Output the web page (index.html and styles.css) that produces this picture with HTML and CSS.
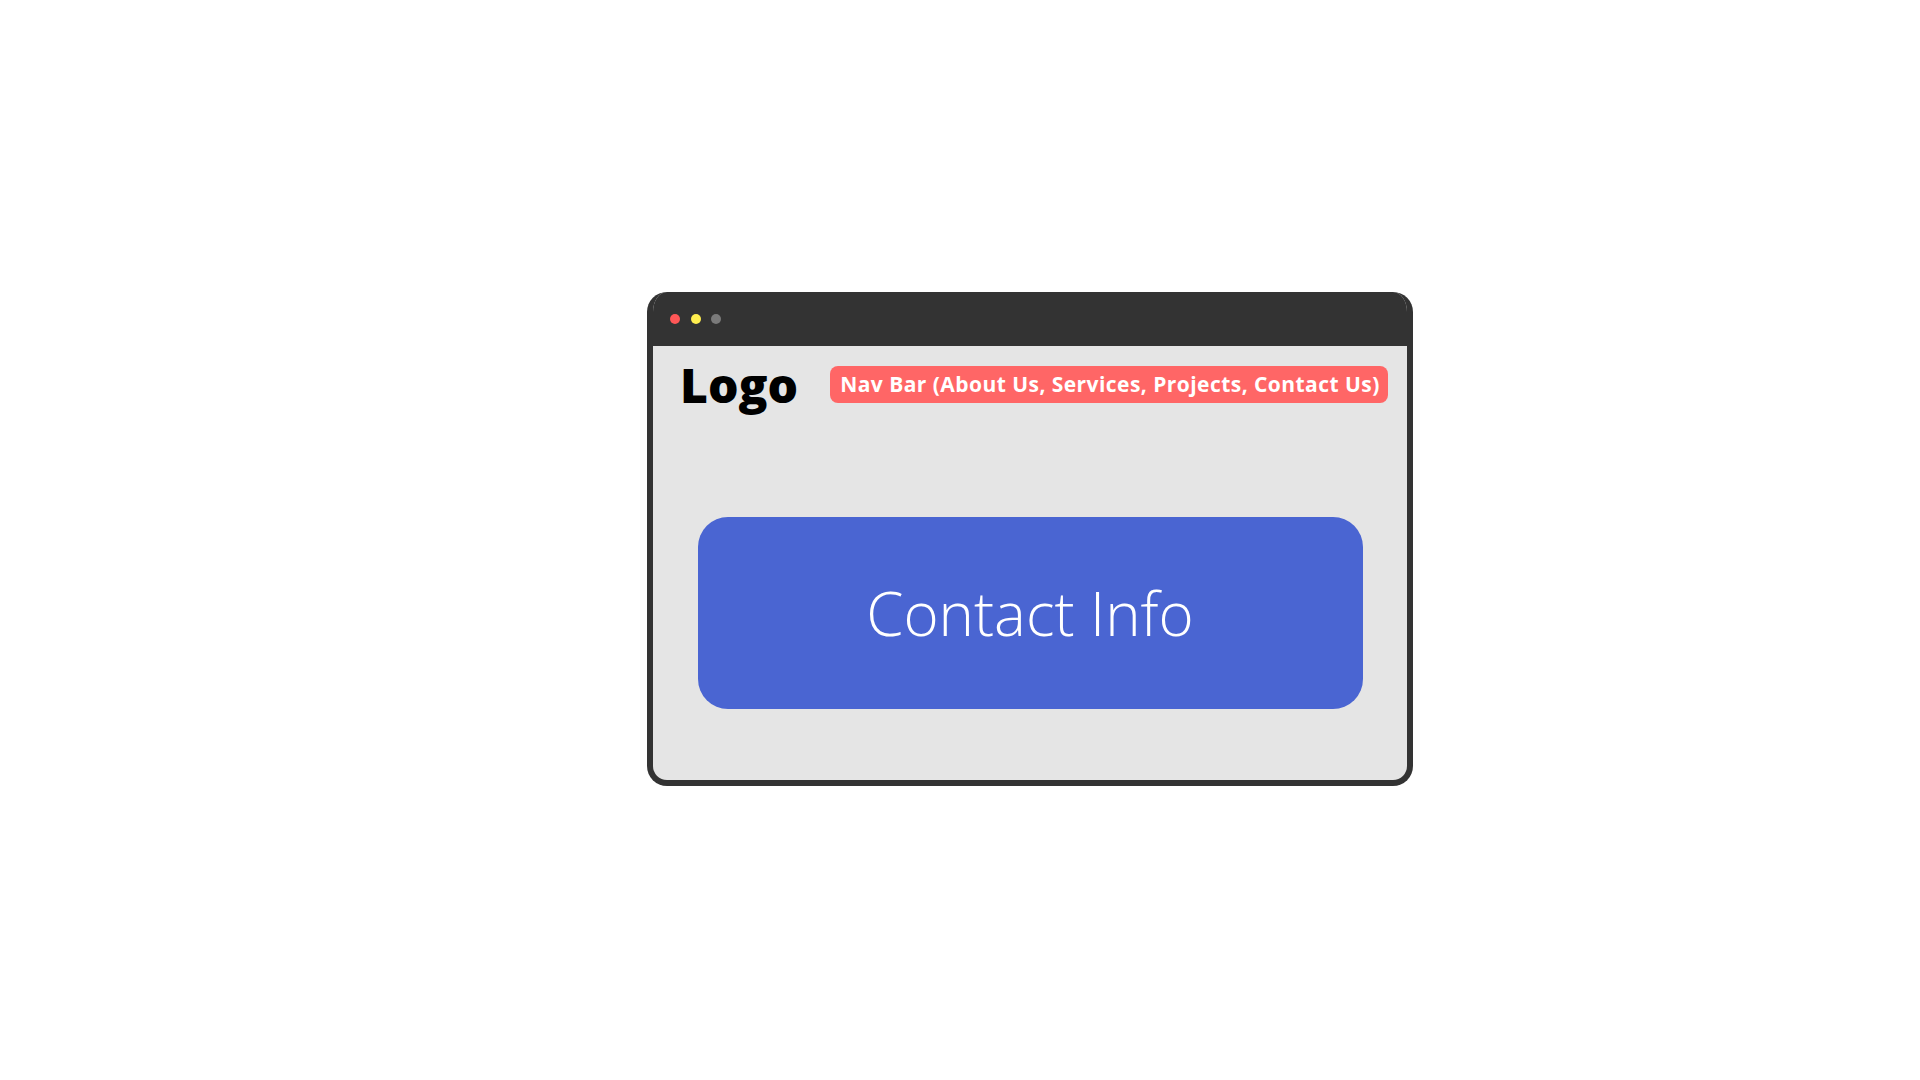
FILE: index.html
```html
<!DOCTYPE html>
<html lang="en">
<head>
  <meta charset="UTF-8" />
  <meta name="viewport" content="width=device-width, initial-scale=1.0"/>
  <title>Contact Page Wireframe</title>
  <link rel="stylesheet" href="styles.css">
</head>
<body>

  <!-- browser window mockup -->
  <div class="window">
    <div class="titlebar">
      <span class="dot red"></span>
      <span class="dot yellow"></span>
      <span class="dot grey"></span>
    </div>

    <div class="page">
      <div class="header">
        <div class="logo">Logo</div>
        <div class="nav">Nav Bar (About Us, Services, Projects, Contact Us)</div>
      </div>

      <div class="contact">Contact Info</div>
    </div>
  </div>

</body>
</html>
```

FILE: styles.css
```css
body {
  margin: 0;
  padding: 0;
  height: 100vh;
  background: #ffffff;
  font-family: 'Open Sans', sans-serif;
  display: flex;
  align-items: center;
  overflow: hidden;
}

.window {
  box-sizing: border-box;
  width: 766px;
  height: 494px;
  margin-left: 647px;
  margin-top: -2px;
  border: 6px solid #333333;
  border-top: 0;
  border-radius: 20px;
  background: #e5e5e5;
  overflow: hidden;
  display: flex;
  flex-direction: column;
}

/* top bar with the three dots */
.titlebar {
  height: 54px;
  background: #333333;
  display: flex;
  align-items: center;
  gap: 10.5px;
  margin: 0 -6px;
  padding-left: 23px;
}

.dot {
  width: 10px;
  height: 10px;
  border-radius: 50%;
}

.red { background: #ff5757; }
.yellow { background: #ffee4f; }
.grey { background: #7a7a7a; }

.page {
  flex: 1;
  display: flex;
  flex-direction: column;
}

.header {
  display: flex;
  align-items: center;
  padding: 20px 0 0 27px;
}

.logo {
  font-size: 48px;
  font-weight: 800;
  line-height: 37px;
  color: #000000;
}

.nav {
  margin-left: 32px;
  height: 37px;
  line-height: 37px;
  padding: 0 8px 0 10px;
  border-radius: 8px;
  background: #ff6666;
  color: #ffffff;
  font-size: 21px;
  font-weight: 700;
  letter-spacing: 0.45px;
  white-space: nowrap;
}

.contact {
  width: 665px;
  height: 192px;
  margin: 114px auto 0;
  border-radius: 30px;
  background: #4a65d2;
  color: #ffffff;
  font-size: 60px;
  font-weight: 300;
  display: flex;
  align-items: center;
  justify-content: center;
}
```
